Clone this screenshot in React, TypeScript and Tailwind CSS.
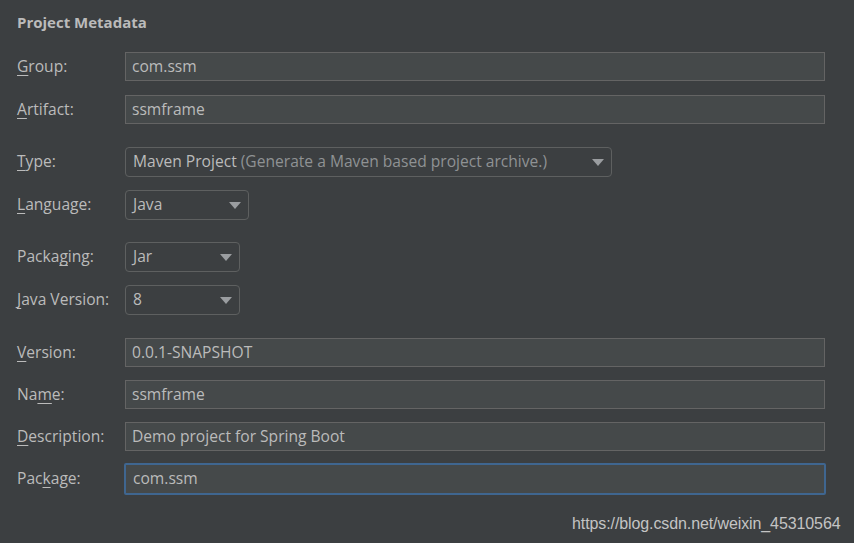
import React from "react";

const font = { fontFamily: '"Open Sans", "Noto Sans", sans-serif' };

function Label({ pre, u, post }: { pre?: string; u: string; post: string }) {
  return (
    <div className="w-[108px] shrink-0 text-[15.6px] text-[#bbbbbb]">
      {pre}
      <span className="underline underline-offset-[3px] decoration-1">{u}</span>
      {post}
    </div>
  );
}

function Field({ value, focused }: { value: string; focused?: boolean }) {
  return focused ? (
    <div className="w-[702px] h-[32px] ml-[-1px] border-2 border-[#3f6690] rounded-[2px] bg-[#45494a] flex items-center pl-[7px] text-[15.6px] text-[#bbbbbb]">
      {value}
    </div>
  ) : (
    <div className="w-[700px] h-[29px] border border-[#646464] bg-[#45494a] flex items-center pl-[6px] text-[15.6px] text-[#bbbbbb]">
      {value}
    </div>
  );
}

function Arrow() {
  return (
    <svg width="12" height="7" viewBox="0 0 12 7" className="shrink-0">
      <path d="M0 0 H12 L6 7 Z" fill="#9a9da0" />
    </svg>
  );
}

function Combo({ w, children }: { w: string; children: React.ReactNode }) {
  return (
    <div className={`${w} h-[30px] border border-[#5e6060] rounded-[4px] flex items-center justify-between pl-[7px] pr-[7px] text-[15.6px] text-[#bbbbbb]`}>
      <div>{children}</div>
      <Arrow />
    </div>
  );
}

export default function App() {
  return (
    <div className="w-[854px] h-[543px] bg-[#3c3f41] relative overflow-hidden" style={font}>
      <div className="pl-[17px] pt-[11px]">
        <div className="text-[15px] font-bold text-[#bbbbbb] h-[22px] leading-[22px]">Project Metadata</div>
        <div className="mt-[19px] flex items-center h-[29px]">
          <Label u="G" post="roup:" />
          <Field value="com.ssm" />
        </div>
        <div className="mt-[14px] flex items-center h-[29px]">
          <Label u="A" post="rtifact:" />
          <Field value="ssmframe" />
        </div>
        <div className="mt-[23px] flex items-center h-[30px]">
          <Label u="T" post="ype:" />
          <Combo w="w-[487px]">
            Maven Project <span className="text-[#8f9294]">(Generate a Maven based project archive.)</span>
          </Combo>
        </div>
        <div className="mt-[13px] flex items-center h-[30px]">
          <Label u="L" post="anguage:" />
          <Combo w="w-[124px]">Java</Combo>
        </div>
        <div className="mt-[22px] flex items-center h-[30px]">
          <Label pre="Packa" u="g" post="ing:" />
          <Combo w="w-[115px]">Jar</Combo>
        </div>
        <div className="mt-[13px] flex items-center h-[30px]">
          <Label u="J" post="ava Version:" />
          <Combo w="w-[115px]">8</Combo>
        </div>
        <div className="mt-[23px] flex items-center h-[29px]">
          <Label u="V" post="ersion:" />
          <Field value="0.0.1-SNAPSHOT" />
        </div>
        <div className="mt-[13px] flex items-center h-[29px]">
          <Label pre="Na" u="m" post="e:" />
          <Field value="ssmframe" />
        </div>
        <div className="mt-[13px] flex items-center h-[29px]">
          <Label u="D" post="escription:" />
          <Field value="Demo project for Spring Boot" />
        </div>
        <div className="mt-[12px] flex items-center h-[32px]">
          <Label pre="Pac" u="k" post="age:" />
          <Field value="com.ssm" focused />
        </div>
      </div>
      <div
        className="absolute left-[572px] top-[512px] text-[16px] text-[#c4c4c4] tracking-[-0.1px]"
        style={{ fontFamily: '"Liberation Sans", Arial, sans-serif' }}
      >
        https://blog.csdn.net/weixin_45310564
      </div>
    </div>
  );
}
